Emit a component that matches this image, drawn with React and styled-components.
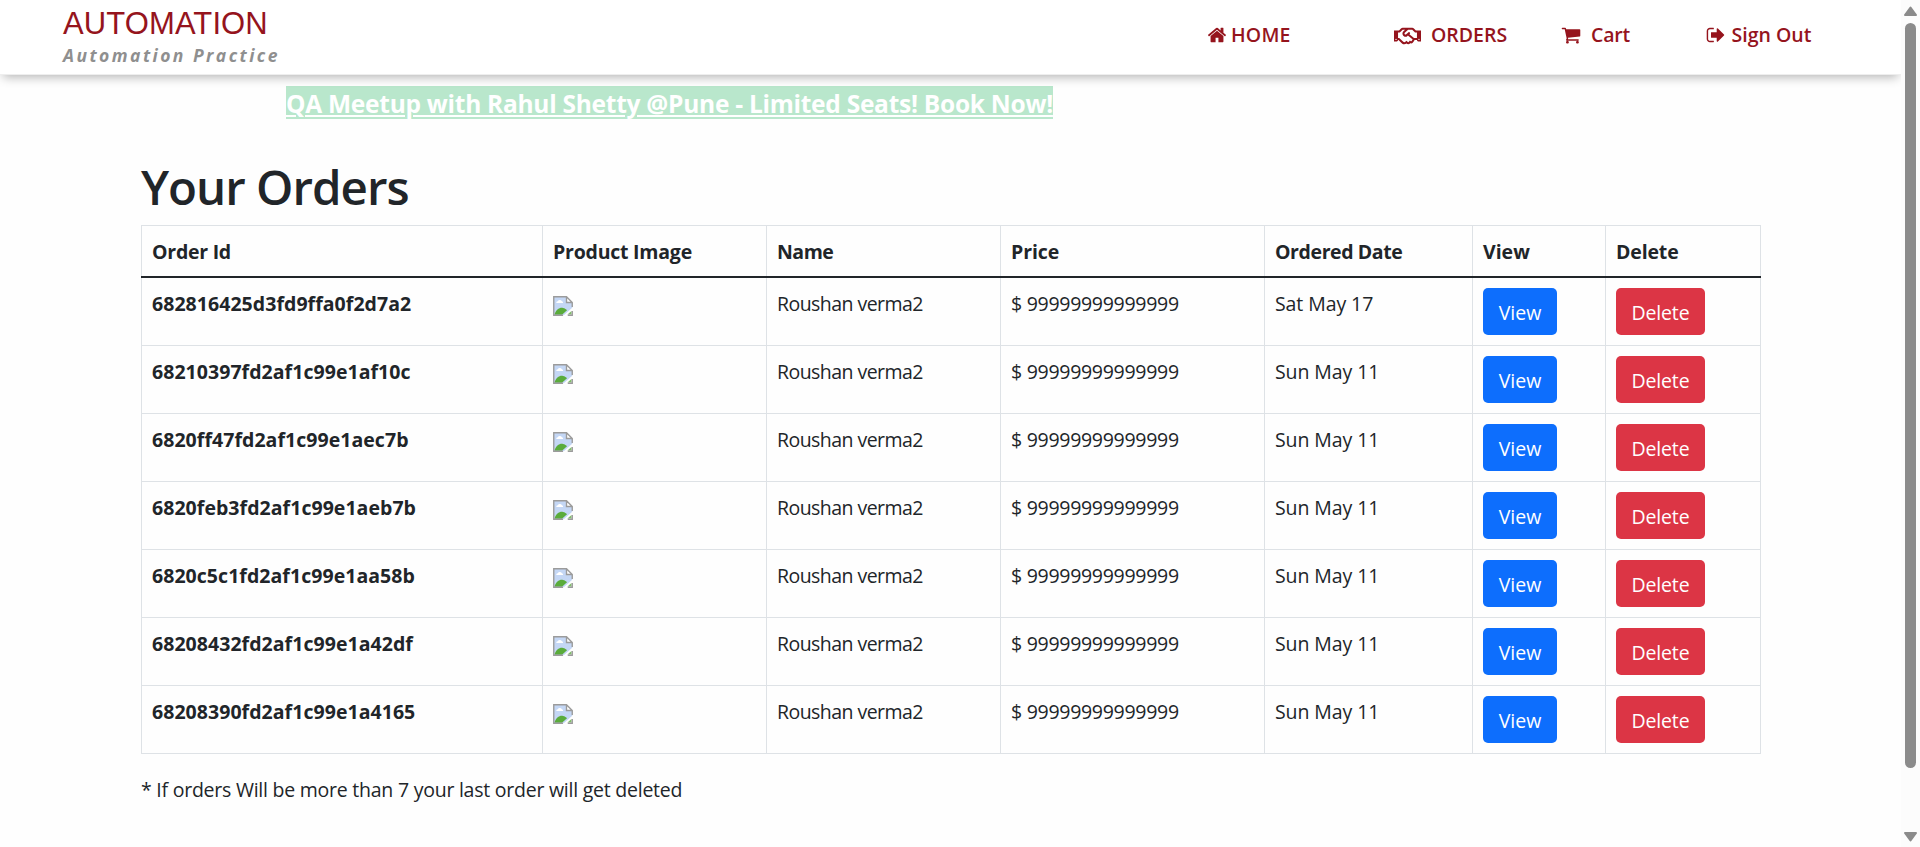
import React from "react";
import styled, { createGlobalStyle } from "styled-components";
import { FaRegHandshake } from "react-icons/fa";

const GlobalStyle = createGlobalStyle`
  *, *::before, *::after { box-sizing: border-box; }
  html, body { margin: 0; padding: 0; background: #fefefe; }
  body {
    overflow: hidden;
    color: #212529;
    font-family: "Open Sans", "Noto Sans", sans-serif;
    font-size: 19.5px;
    line-height: 30px;
  }
`;

const Shell = styled.div`
  display: flex;
  height: 847px;
`;

const Page = styled.div`
  flex: 1;
  min-width: 0;
  overflow: hidden;
`;

const Header = styled.header`
  position: relative;
  z-index: 1;
  display: flex;
  height: 75px;
  padding-left: 63px;
  background: #fff;
  border-bottom: 1px solid #eee;
  box-shadow: 0 5px 10px -3px rgba(0, 0, 0, 0.3);
`;

const Brand = styled.div`
  width: 1144px;
  padding-top: 5px;
`;

const BrandName = styled.div`
  color: #95141d;
  font-family: "Liberation Sans", Arial, sans-serif;
  font-size: 31px;
  line-height: 37px;
  letter-spacing: 0.1px;
`;

const BrandTag = styled.div`
  color: #8f8f8f;
  font-size: 17.5px;
  font-style: italic;
  font-weight: 700;
  line-height: 26px;
  letter-spacing: 2.45px;
`;

const Nav = styled.nav`
  display: grid;
  grid-template-columns: 187px 167px 145px auto;
  padding-top: 20px;
`;

const NavLink = styled.a`
  display: flex;
  align-items: flex-start;
  gap: ${(p) => p.$gap}px;
  color: #95141d;
  font-weight: 600;
  letter-spacing: ${(p) => p.$track || 0}px;
  white-space: nowrap;
`;

const Glyph = styled.svg`
  width: 20px;
  height: 20px;
  margin-top: 5px;
  fill: currentColor;
`;

const Handshake = styled(FaRegHandshake)`
  width: 27px;
  height: 22px;
  margin-top: 5px;
`;

const Banner = styled.a`
  display: block;
  width: 767px;
  height: 33px;
  margin: 11px 0 0 286px;
  padding-top: 2px;
  background: #b9e7cc;
  color: #fff;
  font-size: 24.5px;
  font-weight: 700;
  line-height: 32px;
  letter-spacing: -0.26px;
  white-space: nowrap;
  text-decoration: underline;
  text-decoration-thickness: 2px;
  text-underline-offset: 2px;
`;

const Content = styled.main`
  width: 1620px;
  margin: 38px 0 0 141px;
`;

const Title = styled.h1`
  margin: 0 0 8px;
  font-size: 47.5px;
  font-weight: 600;
  line-height: 60px;
  letter-spacing: -1px;
`;

const Table = styled.table`
  width: 1620px;
  table-layout: fixed;
  border-collapse: separate;
  border-spacing: 0;
`;

const Col = styled.col`
  width: ${(p) => p.$w}px;
`;

const HeadCell = styled.th`
  position: relative;
  height: 53px;
  padding: 11px 10px 10px;
  border: solid #dee2e6;
  border-width: 1px 1px 0 0;
  text-align: left;
  vertical-align: top;
  letter-spacing: ${(p) => p.$track || 0}px;
  &:first-child { border-left-width: 1px; }
  &::after {
    content: "";
    position: absolute;
    right: -1px;
    bottom: 0;
    left: -1px;
    height: 2px;
    background: #212529;
  }
`;

const Cell = styled.td`
  height: 68px;
  padding: ${(p) => (p.$media ? 10 : 11)}px 10px 9px;
  border: solid #dee2e6;
  border-width: 0 1px 1px 0;
  vertical-align: top;
  white-space: nowrap;
  letter-spacing: ${(p) => p.$track || 0}px;
`;

const IdCell = styled(Cell).attrs({ as: "th", scope: "row" })`
  border-left-width: 1px;
  font-weight: 700;
  text-align: left;
`;

const Button = styled.button`
  display: block;
  width: ${(p) => (p.$danger ? 89 : 74)}px;
  height: 47px;
  padding: 2px 0 0;
  border: 0;
  border-radius: 5px;
  background: ${(p) => (p.$danger ? "#dc3545" : "#0d6efd")};
  color: #fff;
  font: inherit;
  letter-spacing: ${(p) => (p.$danger ? -0.15 : 0)}px;
  text-align: center;
`;

const MissingImage = styled.svg`
  display: block;
  width: 20px;
  height: 20px;
  margin-top: 8px;
`;

const Note = styled.p`
  margin: 21px 0 0;
  letter-spacing: -0.24px;
`;

const ScrollTrack = styled.div`
  display: flex;
  flex-direction: column;
  align-items: center;
  width: 19px;
  padding: 6px 0 5px;
  background: #fcfcfc;
`;

const ScrollArrow = styled.svg`
  width: 13px;
  height: 10px;
  fill: #8b8b8b;
  stroke: #8b8b8b;
  stroke-width: 2;
  stroke-linejoin: round;
`;

const ScrollThumb = styled.div`
  width: 11px;
  height: 745px;
  margin: 7px 0 auto;
  border-radius: 6px;
  background: #8b8b8b;
`;

const HOME =
  "M1472 992v480q0 26-19 45t-45 19h-384v-384h-256v384h-384q-26 0-45-19t-19-45v-480q0-1 .5-3t.5-3l575-474 575 474q1 2 1 6zm223-69l-62 74q-8 9-21 11h-3q-13 0-21-7l-692-577-692 577q-12 8-24 7-13-2-21-11l-62-74q-8-10-7-23.5t11-21.5l719-599q32-26 76-26t76 26l244 204v-195q0-14 9-23t23-9h192q14 0 23 9t9 23v408l219 182q10 8 11 21.5t-7 23.5z";
const CART =
  "M704 1536q0 52-38 90t-90 38-90-38-38-90 38-90 90-38 90 38 38 90zm896 0q0 52-38 90t-90 38-90-38-38-90 38-90 90-38 90 38 38 90zm128-1088v512q0 24-16.5 42.5t-40.5 21.5l-1044 122q13 60 13 70 0 16-24 64h920q26 0 45 19t19 45-19 45-45 19h-1024q-26 0-45-19t-19-45q0-11 8-31.5t16-36 21.5-40 15.5-29.5l-177-823h-204q-26 0-45-19t-19-45 19-45 45-19h256q16 0 28.5 6.5t19.5 15.5 13 24.5 8 26 5.5 29.5 4.5 26h1201q26 0 45 19t19 45z";
const SIGN_OUT =
  "M704 1440q0 4 1 20t.5 26.5-3 23.5-10 19.5-20.5 6.5h-320q-119 0-203.5-84.5t-84.5-203.5v-704q0-119 84.5-203.5t203.5-84.5h320q13 0 22.5 9.5t9.5 22.5q0 4 1 20t.5 26.5-3 23.5-10 19.5-20.5 6.5h-320q-66 0-113 47t-47 113v704q0 66 47 113t113 47h312l11.5 1 11.5 3 8 5.5 7 9 2 13.5zm928-544q0 26-19 45l-544 544q-19 19-45 19t-45-19-19-45v-288h-448q-26 0-45-19t-19-45v-384q0-26 19-45t45-19h448v-288q0-26 19-45t45-19 45 19l544 544q19 19 19 45z";

const Icon = ({ path }) => (
  <Glyph viewBox="0 0 1792 1792">
    <path d={path} />
  </Glyph>
);

const BrokenImage = () => (
  <MissingImage viewBox="0 0 16 16">
    <path d="M.6.6h10.2l4.6 4.6v4.2L8.6 15.4H.6z" fill="#c4d7f5" />
    <path d="M2.6 5.6a1.3 1.3 0 0 1 1.2-1.4 1.8 1.8 0 0 1 3.3 0 1.3 1.3 0 0 1 1 1.4z" fill="#fff" />
    <path d="M1.2 14.9c1-4 4-5.900 6.800-5.400 1.500.3 2.500 1 3.200 1.900l-4 3.500z" fill="#5aac3b" />
    <path d="M11.600 14.800l3.200-2.800v2.800z" fill="#7fbf68" />
    <path d="M10.800.6v4.600h4.600z" fill="#fff" />
    <path d="M8 15.400H.6V.6h10.200l4.600 4.600v3.600M10.800.6v4.600h4.600M15.400 12v3.400h-3.600" fill="none" stroke="#9b9b9b" strokeWidth="1.100" />
  </MissingImage>
);

const columns = [
  { label: "Order Id", width: 402, track: -0.25 },
  { label: "Product Image", width: 224, track: -0.22 },
  { label: "Name", width: 234, track: -0.5 },
  { label: "Price", width: 264, track: -0.1 },
  { label: "Ordered Date", width: 208, track: -0.4 },
  { label: "View", width: 133, track: 0 },
  { label: "Delete", width: 155, track: -0.15 },
];

const orders = [
  ["682816425d3fd9ffa0f2d7a2", "Sat May 17"],
  ["68210397fd2af1c99e1af10c", "Sun May 11"],
  ["6820ff47fd2af1c99e1aec7b", "Sun May 11"],
  ["6820feb3fd2af1c99e1aeb7b", "Sun May 11"],
  ["6820c5c1fd2af1c99e1aa58b", "Sun May 11"],
  ["68208432fd2af1c99e1a42df", "Sun May 11"],
  ["68208390fd2af1c99e1a4165", "Sun May 11"],
];

export default function App() {
  return (
    <Shell>
      <GlobalStyle />
      <Page>
        <Header>
          <Brand>
            <BrandName>AUTOMATION</BrandName>
            <BrandTag>Automation Practice</BrandTag>
          </Brand>
          <Nav>
            <NavLink $gap={4} $track={0.2}><Icon path={HOME} />HOME</NavLink>
            <NavLink $gap={10}><Handshake preserveAspectRatio="none" />ORDERS</NavLink>
            <NavLink $gap={10} $track={-0.2}><Icon path={CART} />Cart</NavLink>
            <NavLink $gap={5.5}><Icon path={SIGN_OUT} />Sign Out</NavLink>
          </Nav>
        </Header>
        <Banner>QA Meetup with Rahul Shetty @Pune - Limited Seats! Book Now!</Banner>
        <Content>
          <Title>Your Orders</Title>
          <Table>
            <colgroup>
              {columns.map((c) => <Col key={c.label} $w={c.width} />)}
            </colgroup>
            <thead>
              <tr>
                {columns.map((c) => <HeadCell key={c.label} $track={c.track}>{c.label}</HeadCell>)}
              </tr>
            </thead>
            <tbody>
              {orders.map(([id, date]) => (
                <tr key={id}>
                  <IdCell $track={0.05}>{id}</IdCell>
                  <Cell $media><BrokenImage /></Cell>
                  <Cell $track={-0.55}>Roushan verma2</Cell>
                  <Cell $track={-0.28}>$ 99999999999999</Cell>
                  <Cell $track={-0.08}>{date}</Cell>
                  <Cell $media><Button>View</Button></Cell>
                  <Cell $media><Button $danger>Delete</Button></Cell>
                </tr>
              ))}
            </tbody>
          </Table>
          <Note>* If orders Will be more than 7 your last order will get deleted</Note>
        </Content>
      </Page>
      <ScrollTrack>
        <ScrollArrow viewBox="0 0 13 10"><path d="M6.500 1.500L12 9H1z" /></ScrollArrow>
        <ScrollThumb />
        <ScrollArrow viewBox="0 0 13 10"><path d="M6.500 8.500L12 1H1z" /></ScrollArrow>
      </ScrollTrack>
    </Shell>
  );
}
